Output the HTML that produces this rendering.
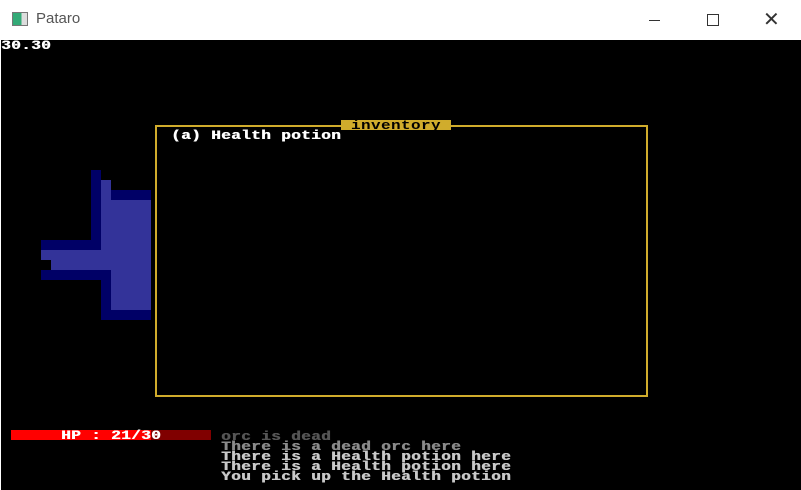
<!DOCTYPE html>
<html><head><style>
body{margin:0;width:801px;height:490px;overflow:hidden;background:#fff;position:relative;font-family:"Liberation Mono",monospace}
.tb{position:absolute;left:0;top:0;width:801px;height:40px;background:#fff}
.game{position:absolute;left:1px;top:40px;width:800px;height:450px;background:#000}
.r{position:absolute}
.t{position:absolute;font-family:"Liberation Mono",monospace;font-weight:bold;font-size:16px;letter-spacing:0.4px;line-height:12px;white-space:pre;color:#fff;transform:scaleY(0.82);transform-origin:0 0;text-shadow:0.6px 0 currentColor;margin-top:2px}
</style></head><body>
<div class="tb">
 <div class="r" style="left:12px;top:12px;width:14px;height:12px;border:1px solid #777;background:linear-gradient(90deg,#3a7 0 60%,#ddd 60%)"></div>
 <div class="r" style="left:36px;top:10px;font-family:'Liberation Sans',sans-serif;font-size:15px;color:#555">Pataro</div>
 <div class="r" style="left:649px;top:20px;width:11px;height:1px;background:#333"></div>
 <div class="r" style="left:707px;top:14px;width:10px;height:10px;border:1px solid #333"></div>
 <div class="r" style="left:763px;top:8px;font-family:'Liberation Sans',sans-serif;font-size:20px;color:#333;line-height:24px">✕</div>
</div>
<div class="game"></div>
<div class="t" style="left:1px;top:39px">30.30</div>
<div class="r" style="left:91px;top:170px;width:10px;height:70px;background:#000066"></div>
<div class="r" style="left:101px;top:180px;width:10px;height:90px;background:#333399"></div>
<div class="r" style="left:111px;top:190px;width:40px;height:10px;background:#000066"></div>
<div class="r" style="left:111px;top:200px;width:40px;height:110px;background:#333399"></div>
<div class="r" style="left:41px;top:240px;width:60px;height:10px;background:#000066"></div>
<div class="r" style="left:41px;top:250px;width:60px;height:10px;background:#333399"></div>
<div class="r" style="left:51px;top:260px;width:50px;height:10px;background:#333399"></div>
<div class="r" style="left:41px;top:270px;width:70px;height:10px;background:#000066"></div>
<div class="r" style="left:101px;top:280px;width:10px;height:40px;background:#000066"></div>
<div class="r" style="left:111px;top:310px;width:40px;height:10px;background:#000066"></div>
<div class="r" style="left:155px;top:125px;width:489px;height:268px;border:2px solid #d0ac2c"></div>
<div class="r" style="left:341px;top:120px;width:110px;height:10px;background:#d0ac2c"></div>
<div class="t" style="left:351px;top:119px;color:#000;text-shadow:none">inventory</div>
<div class="t" style="left:171px;top:129px">(a) Health potion</div>
<div class="r" style="left:11px;top:430px;width:140px;height:10px;background:#ff0000"></div>
<div class="r" style="left:151px;top:430px;width:60px;height:10px;background:#800000"></div>
<div class="t" style="left:61px;top:429px">HP : 21/30</div>
<div class="t" style="left:221px;top:430px;color:#555">orc is dead</div>
<div class="t" style="left:221px;top:440px;color:#8a8a8a">There is a dead orc here</div>
<div class="t" style="left:221px;top:450px;color:#c8c8c8">There is a Health potion here</div>
<div class="t" style="left:221px;top:460px;color:#c8c8c8">There is a Health potion here</div>
<div class="t" style="left:221px;top:470px;color:#c8c8c8">You pick up the Health potion</div>
</body></html>
